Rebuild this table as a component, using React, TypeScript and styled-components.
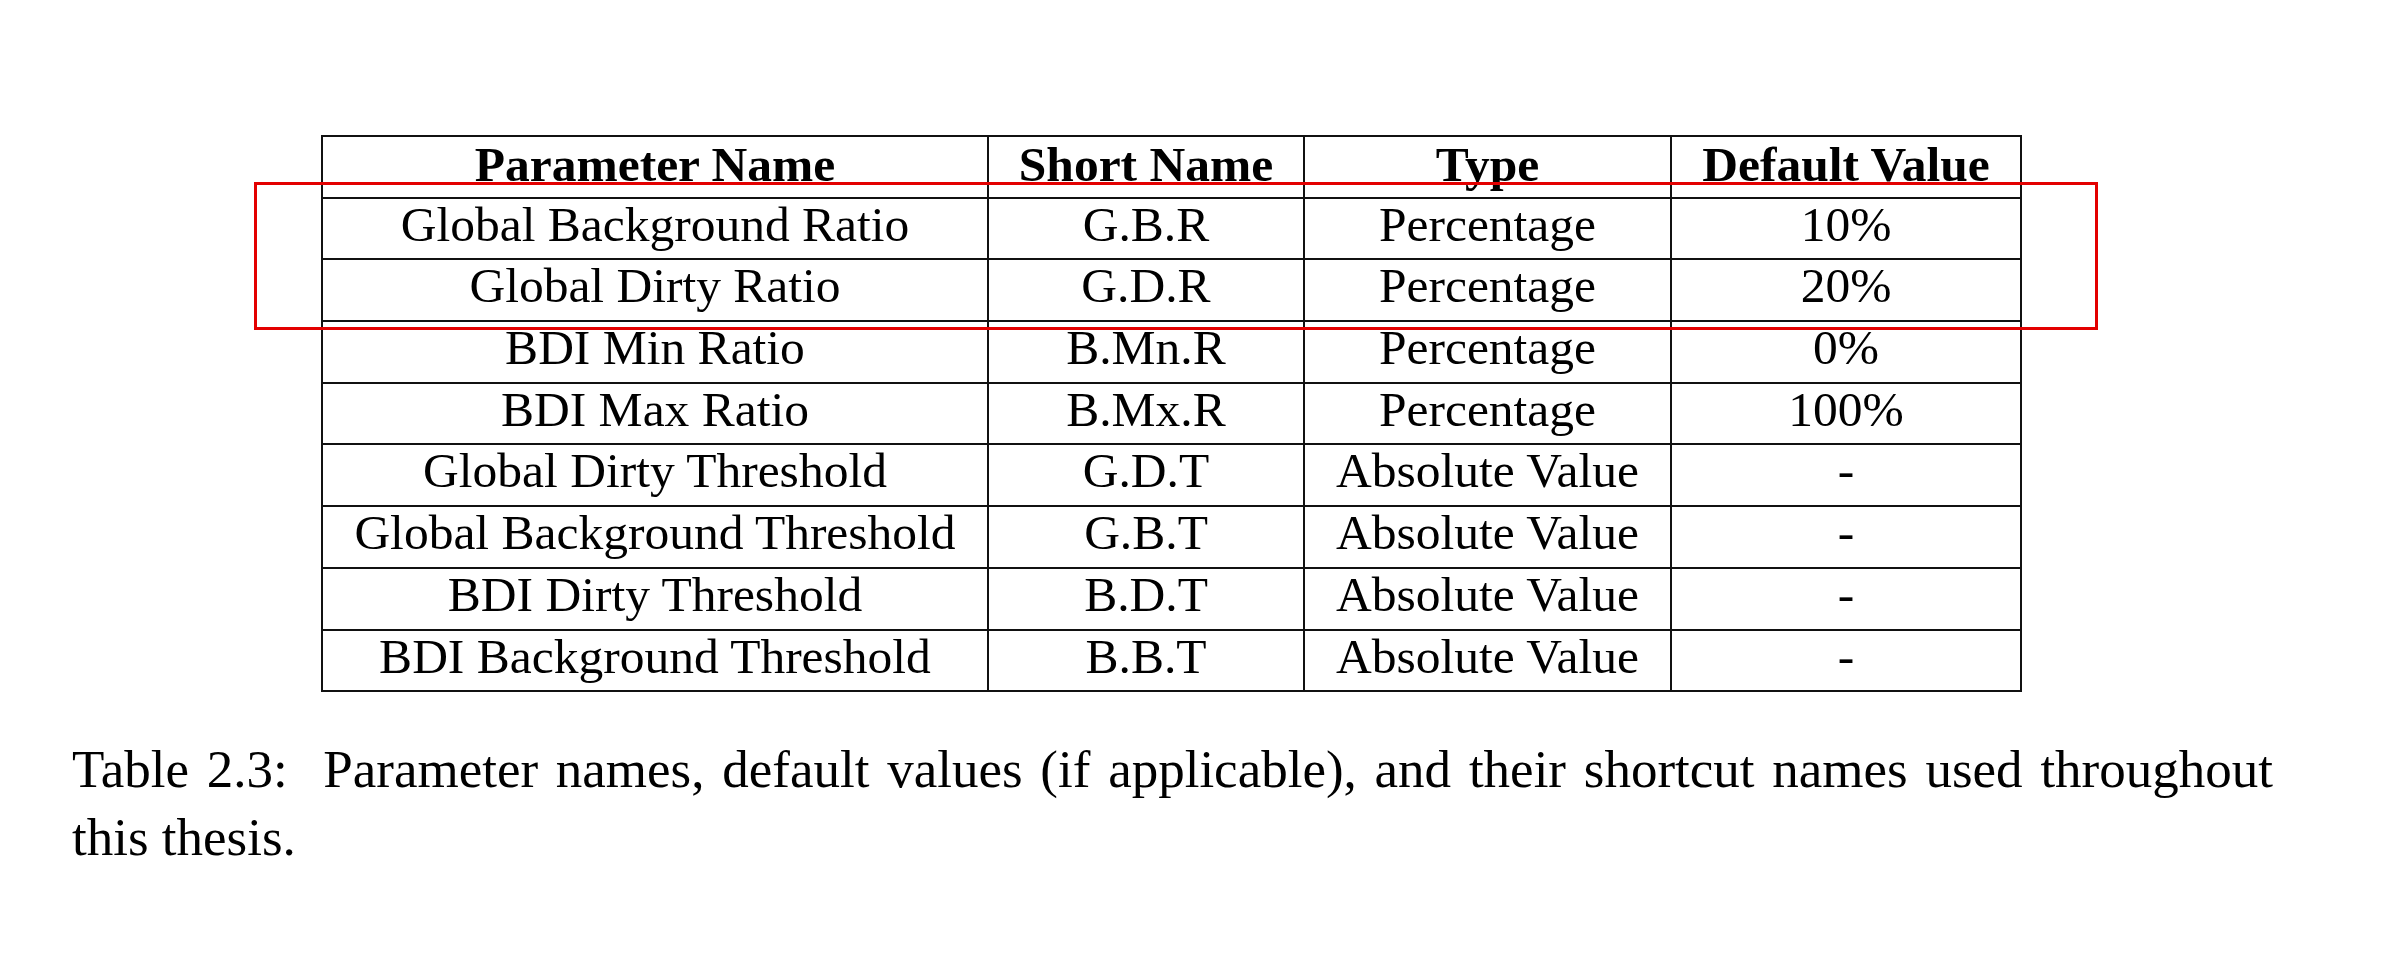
import React from "react";
import styled, { createGlobalStyle } from "styled-components";

const GlobalStyle = createGlobalStyle`
  html, body {
    margin: 0;
    padding: 0;
    background: #ffffff;
  }
  body {
    font-family: "Liberation Serif", "Times New Roman", serif;
    color: #000000;
  }
`;

const Page = styled.div`
  position: relative;
  width: 2406px;
  height: 954px;
  background: #ffffff;
  padding-top: 135px;
  box-sizing: border-box;
  display: flex;
  flex-direction: column;
`;

const TableWrap = styled.div`
  margin-left: 321px;
  display: flex;
`;

const Table = styled.table`
  border-collapse: collapse;
  table-layout: fixed;
  font-family: "Liberation Serif", "Times New Roman", serif;
  font-size: 49.5px;
  line-height: 50px;
`;

const Row = styled.tr`
  height: 61.7px;
`;

const HeadCell = styled.th<{ $w: number }>`
  width: ${(p) => p.$w}px;
  border: 2px solid #111111;
  font-weight: 700;
  text-align: center;
  vertical-align: top;
  padding: 3px 0 0 0;
  white-space: nowrap;
  overflow: visible;
`;

const Cell = styled.td`
  border: 2px solid #111111;
  font-weight: 400;
  text-align: center;
  vertical-align: top;
  padding: 1px 0 0 0;
  white-space: nowrap;
`;

const Caption = styled.div`
  margin-top: 43px;
  margin-left: 72px;
  width: 2201px;
  font-family: "Liberation Serif", "Times New Roman", serif;
  font-size: 53px;
  line-height: 68px;
`;

const CaptionLine = styled.div<{ $justify?: boolean }>`
  text-align: ${(p) => (p.$justify ? "justify" : "left")};
  text-align-last: ${(p) => (p.$justify ? "justify" : "left")};
  white-space: nowrap;
`;

const Highlight = styled.div`
  position: absolute;
  left: 254px;
  top: 182px;
  width: 1844px;
  height: 148px;
  box-sizing: border-box;
  border: 3px solid #e30000;
  pointer-events: none;
`;

const columns = [
  { label: "Parameter Name", w: 664 },
  { label: "Short Name", w: 314 },
  { label: "Type", w: 365 },
  { label: "Default Value", w: 348 },
];

const rows: [string, string, string, string][] = [
  ["Global Background Ratio", "G.B.R", "Percentage", "10%"],
  ["Global Dirty Ratio", "G.D.R", "Percentage", "20%"],
  ["BDI Min Ratio", "B.Mn.R", "Percentage", "0%"],
  ["BDI Max Ratio", "B.Mx.R", "Percentage", "100%"],
  ["Global Dirty Threshold", "G.D.T", "Absolute Value", "-"],
  ["Global Background Threshold", "G.B.T", "Absolute Value", "-"],
  ["BDI Dirty Threshold", "B.D.T", "Absolute Value", "-"],
  ["BDI Background Threshold", "B.B.T", "Absolute Value", "-"],
];

export default function App() {
  return (
    <>
      <GlobalStyle />
      <Page>
        <TableWrap>
          <Table>
            <thead>
              <Row>
                {columns.map((c) => (
                  <HeadCell key={c.label} $w={c.w}>
                    {c.label}
                  </HeadCell>
                ))}
              </Row>
            </thead>
            <tbody>
              {rows.map((r) => (
                <Row key={r[0]}>
                  {r.map((v, i) => (
                    <Cell key={i}>{v}</Cell>
                  ))}
                </Row>
              ))}
            </tbody>
          </Table>
        </TableWrap>
        <Caption>
          <CaptionLine $justify>
            Table 2.3:&nbsp; Parameter names, default values (if applicable), and their shortcut names used throughout
          </CaptionLine>
          <CaptionLine>this thesis.</CaptionLine>
        </Caption>
        <Highlight />
      </Page>
    </>
  );
}
